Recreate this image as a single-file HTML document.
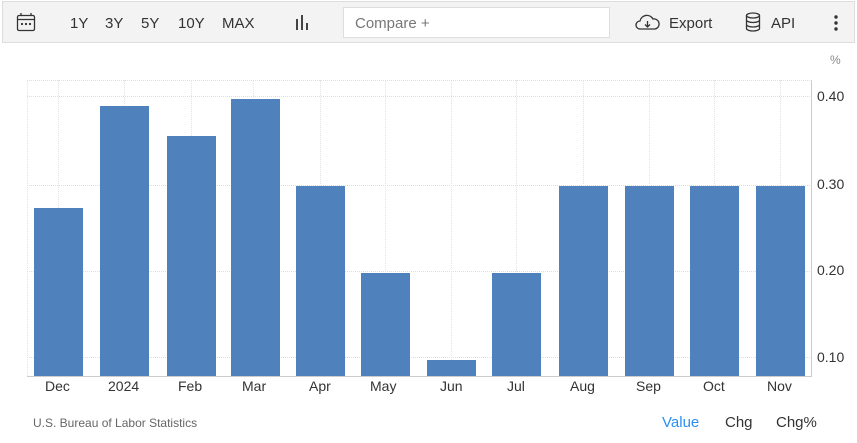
<!DOCTYPE html><html><head><style>
body{margin:0;width:857px;height:443px;background:#fff;font-family:"Liberation Sans",Arial,sans-serif;position:relative;overflow:hidden}
.tb{position:absolute;left:2px;top:1px;width:851px;height:40px;background:#f3f3f3;border:1px solid #ddd}
.t{position:absolute;top:13px;font-size:15px;color:#333}
.cmp{position:absolute;left:340px;top:5px;width:267px;height:31px;background:#fff;border:1px solid #ddd;box-sizing:border-box;color:#777;font-size:15px;padding:7px 11px}
.ax{position:absolute;font-size:14px;color:#333}
.bar{position:absolute;background:#4f81bd;width:49px;bottom:67px}
.gl{position:absolute;left:27px;width:785px;border-top:1px dotted #ddd}
.vl{position:absolute;top:80px;height:296px;border-left:1px dotted #e3e3e3}
.ft{position:absolute;top:414px;font-size:15px;color:#333}
</style></head><body>
<div class="tb">
<svg style="position:absolute;left:13px;top:10px" width="20" height="20" viewBox="0 0 20 20" fill="none" stroke="#333" stroke-width="1.3"><rect x="1.5" y="3.5" width="17" height="15" rx="1.5"/><line x1="1.5" y1="7.5" x2="18.5" y2="7.5"/><line x1="5" y1="1" x2="5" y2="4"/><line x1="15" y1="1" x2="15" y2="4"/><circle cx="6" cy="12" r=".5" fill="#333"/><circle cx="10" cy="12" r=".5" fill="#333"/><circle cx="14" cy="12" r=".5" fill="#333"/></svg>
<span class="t" style="left:67px">1Y</span><span class="t" style="left:102px">3Y</span><span class="t" style="left:138px">5Y</span><span class="t" style="left:175px">10Y</span><span class="t" style="left:219px">MAX</span>
<svg style="position:absolute;left:292px;top:13px" width="16" height="16"><rect x="1" y="4" width="2" height="11" fill="#444"/><rect x="6" y="0" width="2" height="15" fill="#444"/><rect x="11" y="8" width="2" height="7" fill="#444"/></svg>
<div class="cmp">Compare +</div>
<svg style="position:absolute;left:632px;top:11px" width="26" height="18" viewBox="0 0 26 18" fill="none" stroke="#333" stroke-width="1.3"><path d="M7 16H5a4 4 0 0 1 0-8 7 7 0 0 1 13-2 5 5 0 0 1 2 10h-2z"/><path d="M12.5 8v6M10 11.5l2.5 2.5 2.5-2.5"/></svg>
<span class="t" style="left:666px">Export</span>
<svg style="position:absolute;left:742px;top:10px" width="16" height="20" viewBox="0 0 16 20" fill="none" stroke="#333" stroke-width="1.3"><ellipse cx="8" cy="3.5" rx="6.5" ry="2.5"/><path d="M1.5 3.5v13c0 1.4 2.9 2.5 6.5 2.5s6.5-1.1 6.5-2.5v-13M1.5 8c0 1.4 2.9 2.5 6.5 2.5s6.5-1.1 6.5-2.5M1.5 12.5c0 1.4 2.9 2.5 6.5 2.5s6.5-1.1 6.5-2.5"/></svg>
<span class="t" style="left:768px">API</span>
<svg style="position:absolute;left:831px;top:13px" width="4" height="16"><circle cx="2" cy="2" r="1.7" fill="#333"/><circle cx="2" cy="8" r="1.7" fill="#333"/><circle cx="2" cy="14" r="1.7" fill="#333"/></svg>
</div>
<span class="ax" style="left:830px;top:53px;font-size:12px;color:#888">%</span>
<div class="gl" style="top:80px"></div><div class="gl" style="top:96px"></div><div class="gl" style="top:185px"></div><div class="gl" style="top:271px"></div><div class="gl" style="top:357px"></div>
<div class="vl" style="left:27px"></div><div class="vl" style="left:58px"></div><div class="vl" style="left:124px"></div><div class="vl" style="left:191px"></div><div class="vl" style="left:253px"></div><div class="vl" style="left:320px"></div><div class="vl" style="left:385px"></div><div class="vl" style="left:451px"></div><div class="vl" style="left:516px"></div><div class="vl" style="left:583px"></div><div class="vl" style="left:649px"></div><div class="vl" style="left:714px"></div><div class="vl" style="left:780px"></div>
<div class="bar" style="left:34px;top:208px"></div><div class="bar" style="left:100px;top:106px"></div><div class="bar" style="left:167px;top:136px"></div><div class="bar" style="left:231px;top:99px"></div><div class="bar" style="left:296px;top:186px"></div><div class="bar" style="left:361px;top:273px"></div><div class="bar" style="left:427px;top:360px"></div><div class="bar" style="left:492px;top:273px"></div><div class="bar" style="left:559px;top:186px"></div><div class="bar" style="left:625px;top:186px"></div><div class="bar" style="left:690px;top:186px"></div><div class="bar" style="left:756px;top:186px"></div>
<div style="position:absolute;left:27px;top:376px;width:785px;border-top:1px solid #ccc"></div>
<div style="position:absolute;left:811px;top:80px;height:297px;border-left:1px solid #ccc"></div>
<span class="ax" style="left:817px;top:88px">0.40</span><span class="ax" style="left:817px;top:176px">0.30</span><span class="ax" style="left:817px;top:262px">0.20</span><span class="ax" style="left:817px;top:349px">0.10</span>
<span class="ax" style="left:45px;top:378px">Dec</span><span class="ax" style="left:108px;top:378px">2024</span><span class="ax" style="left:178px;top:378px">Feb</span><span class="ax" style="left:242px;top:378px">Mar</span><span class="ax" style="left:309px;top:378px">Apr</span><span class="ax" style="left:370px;top:378px">May</span><span class="ax" style="left:440px;top:378px">Jun</span><span class="ax" style="left:507px;top:378px">Jul</span><span class="ax" style="left:570px;top:378px">Aug</span><span class="ax" style="left:636px;top:378px">Sep</span><span class="ax" style="left:703px;top:378px">Oct</span><span class="ax" style="left:767px;top:378px">Nov</span>
<span style="position:absolute;left:33px;top:416px;font-size:12px;color:#666">U.S. Bureau of Labor Statistics</span>
<span class="ft" style="left:662px;color:#2d8ff0">Value</span><span class="ft" style="left:725px">Chg</span><span class="ft" style="left:776px">Chg%</span>
</body></html>
